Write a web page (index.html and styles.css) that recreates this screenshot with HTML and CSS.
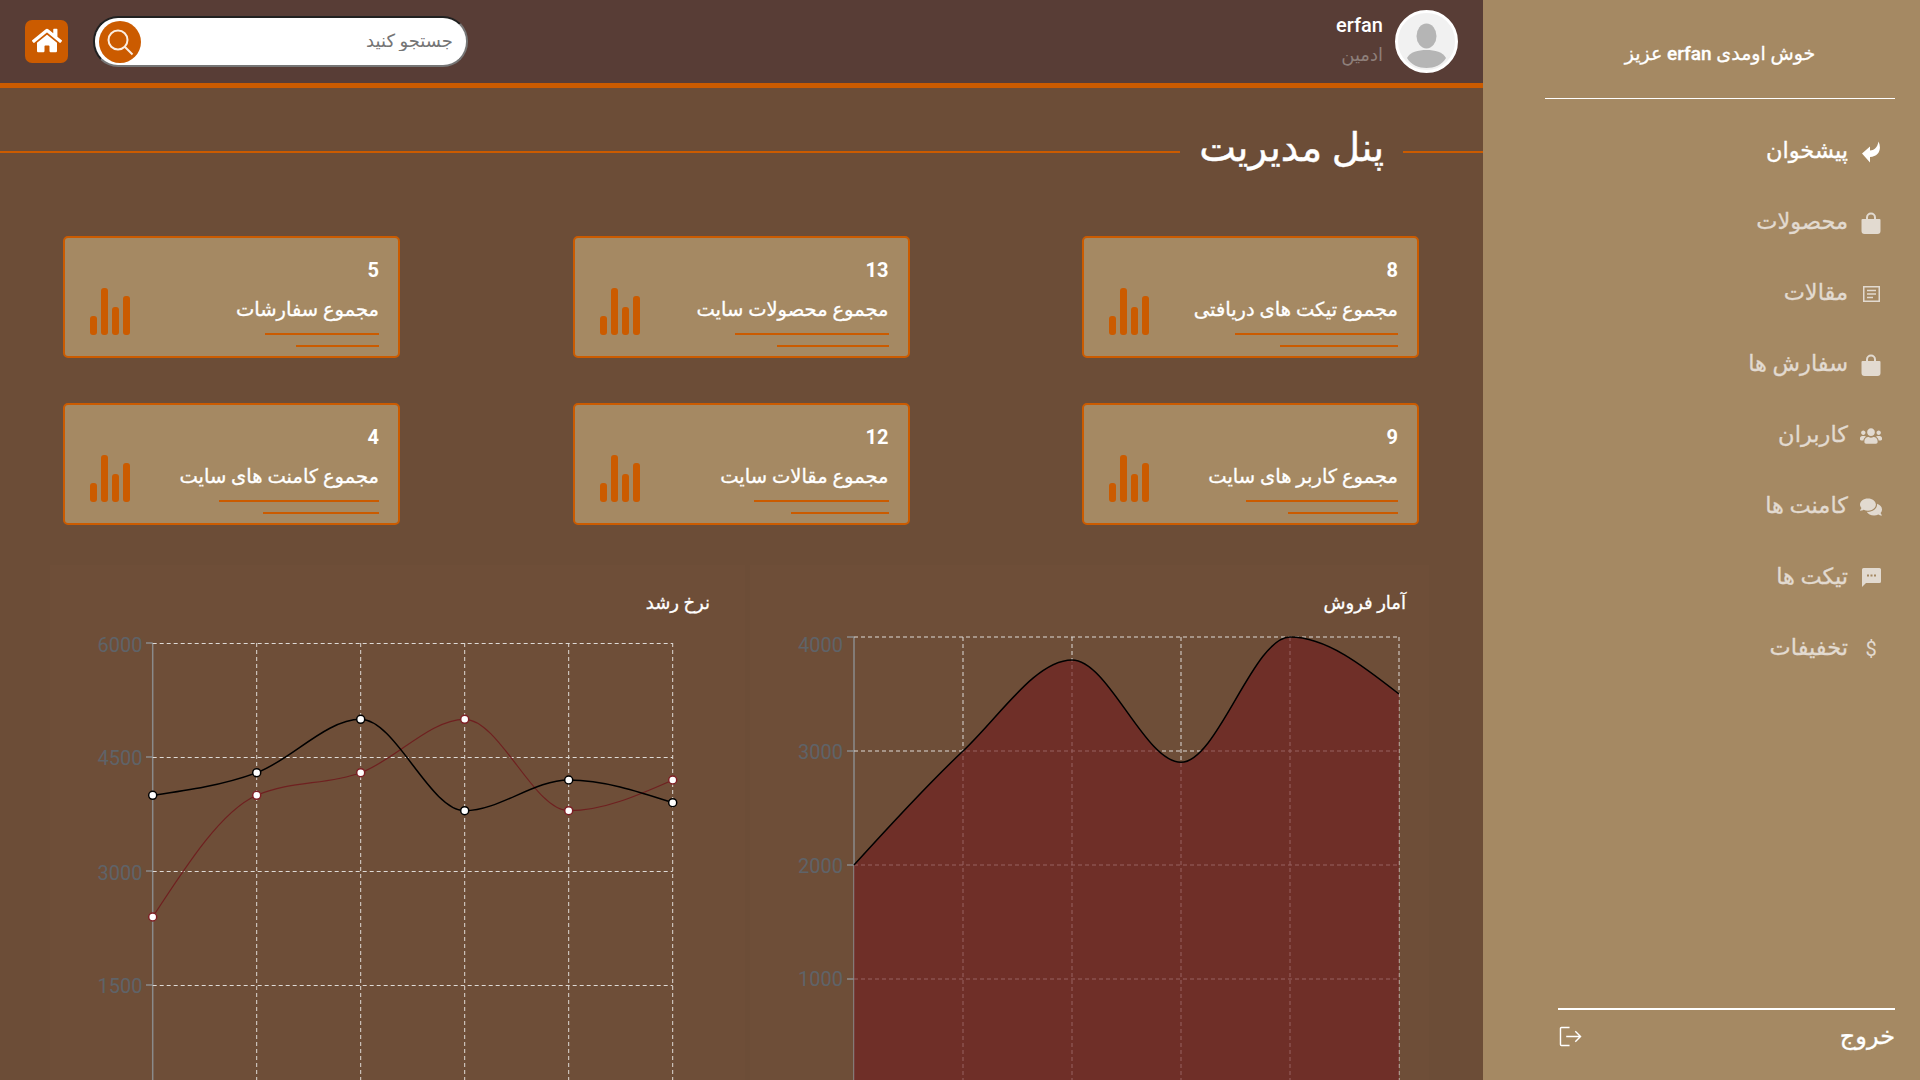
FILE: index.html
```html
<!doctype html>
<html lang="fa" dir="rtl">
  <head>
    <meta charset="utf-8"/>
    <title>پنل مدیریت</title>
    <link rel="stylesheet" href="styles.css">
  </head>
  <body>
    <aside class="sidebar">
      <div class="welcome">خوش اومدی erfan عزیز</div>
      <nav class="side-nav">
        <a class="side-link active">
          <span class="side-icon"><svg width="19" height="22" viewBox="0 0 19 22"><path d="M0 12.500L8 5.500V9.500C12 9.500 15.500 6.500 16.500 0.500C20 8 17 15.500 8 16V21.500Z"/></svg></span>
          پیشخوان
        </a>
        <a class="side-link">
          <span class="side-icon"><svg width="20" height="22" viewBox="0 0 20 22"><path d="M5 7V5.500a5 5 0 0 1 10 0V7h3.500a1 1 0 0 1 1 1v11a3 3 0 0 1-3 3h-13a3 3 0 0 1-3-3V8a1 1 0 0 1 1-1zm2 0h6V5.500a3 3 0 0 0-6 0z" fill-rule="evenodd"/></svg></span>
          محصولات
        </a>
        <a class="side-link">
          <span class="side-icon"><svg width="17" height="16" viewBox="0 0 17 16"><path class="icon-line" d="M.75.75h15.500v14.500H.75zM4 4.500h9M4 8h9M4 11.500h6"/></svg></span>
          مقالات
        </a>
        <a class="side-link">
          <span class="side-icon"><svg width="20" height="22" viewBox="0 0 20 22"><path d="M5 7V5.500a5 5 0 0 1 10 0V7h3.500a1 1 0 0 1 1 1v11a3 3 0 0 1-3 3h-13a3 3 0 0 1-3-3V8a1 1 0 0 1 1-1zm2 0h6V5.500a3 3 0 0 0-6 0z" fill-rule="evenodd"/></svg></span>
          سفارش ها
        </a>
        <a class="side-link">
          <span class="side-icon"><svg width="22" height="18" viewBox="0 0 640 512"><path d="M96 224c35.300 0 64-28.700 64-64s-28.700-64-64-64-64 28.700-64 64 28.700 64 64 64zm448 0c35.300 0 64-28.700 64-64s-28.700-64-64-64-64 28.700-64 64 28.700 64 64 64zm32 32h-64c-17.600 0-33.500 7.100-45.100 18.600 40.300 22.100 68.900 62 75.100 109.400h66c17.700 0 32-14.300 32-32v-32c0-35.300-28.700-64-64-64zm-256 0c61.900 0 112-50.100 112-112S381.900 32 320 32 208 82.100 208 144s50.100 112 112 112zm76.800 32h-8.300c-20.800 10-43.900 16-68.500 16s-47.600-6-68.500-16h-8.300C179.600 288 128 339.600 128 403.200V432c0 26.500 21.500 48 48 48h288c26.500 0 48-21.500 48-48v-28.800c0-63.600-51.600-115.200-115.200-115.200zm-223.700-13.400C161.500 263.100 145.600 256 128 256H64c-35.300 0-64 28.700-64 64v32c0 17.700 14.300 32 32 32h65.900c6.300-47.400 34.900-87.300 75.200-109.400z"/></svg></span>
          کاربران
        </a>
        <a class="side-link">
          <span class="side-icon"><svg width="22" height="20" viewBox="0 0 576 512"><path d="M416 192c0-88.400-93.100-160-208-160S0 103.600 0 192c0 34.300 14.100 65.900 38 92-13.400 30.200-35.500 54.200-35.800 54.500-2.200 2.300-2.800 5.700-1.500 8.700S4.800 352 8 352c36.600 0 66.900-12.300 88.700-25 32.200 15.700 70.300 25 111.300 25 114.900 0 208-71.600 208-160zm122 220c23.900-26 38-57.700 38-92 0-66.900-53.500-124.200-129.300-148.100.9 6.600 1.300 13.300 1.300 20.100 0 105.900-107.700 192-240 192-10.800 0-21.300-.8-31.700-1.900C207.800 439.600 281.800 480 368 480c41 0 79.100-9.200 111.300-25 21.800 12.700 52.100 25 88.700 25 3.200 0 6.100-1.900 7.300-4.800 1.300-2.900.7-6.300-1.500-8.700-.3-.3-22.400-24.200-35.800-54.500z"/></svg></span>
          کامنت ها
        </a>
        <a class="side-link">
          <span class="side-icon"><svg width="19" height="19" viewBox="0 0 19 19"><path d="M1.500 0h16A1.500 1.500 0 0 1 19 1.500v12a1.500 1.500 0 0 1-1.500 1.500H4l-4 4V1.500A1.500 1.500 0 0 1 1.500 0zM5 6.500v2h2v-2zm3.500 0v2h2v-2zm3.500 0v2h2v-2z" fill-rule="evenodd"/></svg></span>
          تیکت ها
        </a>
        <a class="side-link">
          <span class="side-icon side-dollar">$</span>
          تخفیفات
        </a>
      </nav>
      <div class="logout">
        خروج
        <svg width="23" height="21" viewBox="0 0 24 22"><path class="icon-line" d="M11 1.500H2.500a1 1 0 0 0-1 1v17a1 1 0 0 0 1 1H11M7.500 11H22.500M17 5.500l5.500 5.500-5.500 5.500"/></svg>
      </div>
    </aside>

    <main class="main">
      <header class="topbar">
        <div class="user">
          <div class="avatar">
            <svg width="57" height="57" viewBox="0 0 57 57"><ellipse cx="28.500" cy="23" rx="10" ry="12.500"/><path d="M9 45C12 39 20 37 28.500 37S45 39 48 45C44 52 36 55 28.500 55S13 52 9 45Z"/></svg>
          </div>
          <div class="user-info">
            <div class="user-name">erfan</div>
            <div class="user-role">ادمین</div>
          </div>
        </div>
        <div class="top-left">
          <div class="search">
            <input class="search-input" placeholder="جستجو کنید">
            <button class="search-btn">
              <svg width="28" height="28" viewBox="0 0 28 28"><circle cx="12" cy="12" r="9.500"/><path d="M19 19l7.500 7.500"/></svg>
            </button>
          </div>
          <div class="home-btn">
            <svg width="30" height="27" viewBox="0 0 576 512"><path d="M280.370 148.260L96 300.110V464a16 16 0 0 0 16 16l112.060-.29a16 16 0 0 0 15.920-16V368a16 16 0 0 1 16-16h64a16 16 0 0 1 16 16v95.640a16 16 0 0 0 16 16.050L464 480a16 16 0 0 0 16-16V300L295.670 148.260a12.190 12.190 0 0 0-15.300 0zM571.600 251.470L488 182.560V44.050a12 12 0 0 0-12-12h-56a12 12 0 0 0-12 12v72.610L318.470 43a48 48 0 0 0-61 0L4.340 251.470a12 12 0 0 0-1.600 16.900l25.500 31A12 12 0 0 0 45.150 301l235.220-193.740a12.190 12.190 0 0 1 15.300 0L530.900 301a12 12 0 0 0 16.900-1.600l25.500-31a12 12 0 0 0-1.700-16.930z"/></svg>
          </div>
        </div>
      </header>

      <div class="page-title">
        <span class="title-line short"></span>
        <h1>پنل مدیریت</h1>
        <span class="title-line"></span>
      </div>

      <section class="cards">
        <div class="card">
          <div class="card-text">
            <div class="card-num">8</div>
            <div class="card-label">مجموع تیکت های دریافتی</div>
          </div>
          <div class="bars"><i class="b1"></i><i class="b2"></i><i class="b3"></i><i class="b4"></i></div>
        </div>
        <div class="card">
          <div class="card-text">
            <div class="card-num">13</div>
            <div class="card-label">مجموع محصولات سایت</div>
          </div>
          <div class="bars"><i class="b1"></i><i class="b2"></i><i class="b3"></i><i class="b4"></i></div>
        </div>
        <div class="card">
          <div class="card-text">
            <div class="card-num">5</div>
            <div class="card-label">مجموع سفارشات</div>
          </div>
          <div class="bars"><i class="b1"></i><i class="b2"></i><i class="b3"></i><i class="b4"></i></div>
        </div>
        <div class="card">
          <div class="card-text">
            <div class="card-num">9</div>
            <div class="card-label">مجموع کاربر های سایت</div>
          </div>
          <div class="bars"><i class="b1"></i><i class="b2"></i><i class="b3"></i><i class="b4"></i></div>
        </div>
        <div class="card">
          <div class="card-text">
            <div class="card-num">12</div>
            <div class="card-label">مجموع مقالات سایت</div>
          </div>
          <div class="bars"><i class="b1"></i><i class="b2"></i><i class="b3"></i><i class="b4"></i></div>
        </div>
        <div class="card">
          <div class="card-text">
            <div class="card-num">4</div>
            <div class="card-label">مجموع کامنت های سایت</div>
          </div>
          <div class="bars"><i class="b1"></i><i class="b2"></i><i class="b3"></i><i class="b4"></i></div>
        </div>
      </section>

      <section class="charts">
        <div class="chart-panel sales">
          <div class="chart-title">آمار فروش</div>
          <svg class="chart" width="679" height="466" viewBox="750 614 679 466">
            <path class="axis" d="M854 637V1080M847 637H854M847 751H854M847 865H854M847 979H854"/>
            <path class="grid" d="M854 637H1399M854 751H1399M854 865H1399M854 979H1399M963 637V1080M1072 637V1080M1181 637V1080M1290 637V1080M1399 637V1080"/>
            <path class="area" d="M854 865C890.300 825 926.700 785.200 963 751C999.300 716.800 1035.700 660 1072 660C1108.300 660 1144.700 762.300 1181 762.300C1217.300 762.300 1253.700 637 1290 637C1326.300 637 1362.700 665.500 1399 694V1080H854Z"/>
            <path class="line-black" d="M854 865C890.300 825 926.700 785.200 963 751C999.300 716.800 1035.700 660 1072 660C1108.300 660 1144.700 762.300 1181 762.300C1217.300 762.300 1253.700 637 1290 637C1326.300 637 1362.700 665.500 1399 694"/>
            <text class="y-label" x="843" y="652">4000</text>
            <text class="y-label" x="843" y="759">3000</text>
            <text class="y-label" x="843" y="873">2000</text>
            <text class="y-label" x="843" y="986">1000</text>
          </svg>
        </div>
        <div class="chart-panel growth">
          <div class="chart-title">نرخ رشد</div>
          <svg class="chart" width="695" height="466" viewBox="50 614 695 466">
            <path class="axis" d="M152.700 643V1080M146 643H152.700M146 757H152.700M146 871H152.700M146 985H152.700"/>
            <path class="grid" d="M152.700 643.500H672.700M152.700 757.500H672.700M152.700 871.500H672.700M152.700 985.500H672.700M256.700 643V1080M360.700 643V1080M464.700 643V1080M568.700 643V1080M672.700 643V1080"/>
            <path class="line-red" d="M152.700 917C187.400 863.700 222 810.300 256.700 795.300C291.400 780.300 326 785.350 360.700 772.700C395.400 760.050 430 719.300 464.700 719.300C499.400 719.300 534 810.700 568.700 810.700C603.400 810.700 638 795.300 672.700 780"/>
            <path class="line-black" d="M152.700 795.300C187.400 790.300 222 785.400 256.700 772.700C291.400 760 326 719.300 360.700 719.300C395.400 719.300 430 810.700 464.700 810.700C499.400 810.700 534 780 568.700 780C603.400 780 638 791.400 672.700 802.700"/>
            <g class="dots-red">
              <circle cx="152.700" cy="917" r="4"/>
              <circle cx="256.700" cy="795.300" r="4"/>
              <circle cx="360.700" cy="772.700" r="4"/>
              <circle cx="464.700" cy="719.300" r="4"/>
              <circle cx="568.700" cy="810.700" r="4"/>
              <circle cx="672.700" cy="780" r="4"/>
            </g>
            <g class="dots-black">
              <circle cx="152.700" cy="795.300" r="4"/>
              <circle cx="256.700" cy="772.700" r="4"/>
              <circle cx="360.700" cy="719.300" r="4"/>
              <circle cx="464.700" cy="810.700" r="4"/>
              <circle cx="568.700" cy="780" r="4"/>
              <circle cx="672.700" cy="802.700" r="4"/>
            </g>
            <text class="y-label" x="142.500" y="652">6000</text>
            <text class="y-label" x="142.500" y="765">4500</text>
            <text class="y-label" x="142.500" y="880">3000</text>
            <text class="y-label" x="142.500" y="993">1500</text>
          </svg>
        </div>
      </section>
    </main>
  </body>
</html>
```

FILE: styles.css
```css
* {
  box-sizing: border-box;
}
html, body {
  margin: 0;
  height: 1080px;
  overflow: hidden;
}
body {
  display: flex;
  font-family: Roboto, "DejaVu Sans", sans-serif;
  background-color: #6c4d37;
  color: #ffffff;
}

/* sidebar */
.sidebar {
  width: 437px;
  height: 1080px;
  background-color: #a58963;
  display: flex;
  flex-direction: column;
  padding: 0 25px 0 25px;
}
.welcome {
  height: 99px;
  padding-top: 42px;
  margin-left: 37px;
  line-height: 24px;
  text-align: center;
  font-size: 19px;
  font-weight: 500;
  -webkit-text-stroke: 0.3px;
  border-bottom: 1px solid #ffffff;
}
.side-nav {
  margin-top: 17px;
  flex: 1;
}
.side-link {
  height: 71px;
  display: flex;
  align-items: center;
  gap: 4px;
  padding-right: 5px;
  padding-bottom: 3px;
  font-size: 22.5px;
  -webkit-text-stroke: 0.3px;
  color: #e2dad0;
}
.side-link.active {
  color: #ffffff;
}
.side-icon {
  width: 38px;
  display: flex;
  justify-content: center;
  align-items: center;
  padding-top: 3px;
}
.side-icon svg {
  fill: currentColor;
  display: block;
}
.icon-line {
  fill: none;
  stroke: currentColor;
  stroke-width: 1.5;
}
.side-dollar {
  font-size: 20px;
  -webkit-text-stroke: 0;
}
.logout {
  height: 72px;
  margin-left: 50px;
  border-top: 2px solid #ffffff;
  display: flex;
  justify-content: space-between;
  align-items: center;
  padding: 0 0 18px 1px;
  font-size: 24px;
  font-weight: 500;
  -webkit-text-stroke: 0.3px;
}
.logout svg {
  display: block;
}

/* top bar */
.main {
  width: 1483px;
  height: 1080px;
}
.topbar {
  height: 88px;
  background-color: #583d36;
  border-bottom: 5px solid #cb5b00;
  display: flex;
  justify-content: space-between;
  align-items: center;
  padding: 0 25px 0 25px;
}
.user {
  display: flex;
  align-items: center;
  gap: 12px;
}
.avatar {
  width: 63px;
  height: 63px;
  border-radius: 50%;
  border: 3px solid #ffffff;
  background-color: #f1f1f1;
  overflow: hidden;
}
.avatar svg {
  display: block;
  fill: #b5b5b5;
}
.user-info {
  padding-bottom: 4px;
}
.user-name {
  font-size: 20px;
  font-weight: 500;
  line-height: 30px;
}
.user-role {
  font-size: 18px;
  line-height: 30px;
  color: #8e7f7a;
}
.top-left {
  display: flex;
  align-items: center;
  gap: 25px;
}
.search {
  position: relative;
  width: 375px;
  height: 51px;
}
.search-input {
  width: 100%;
  height: 100%;
  border: 2px inset #767676;
  border-radius: 25px;
  background-color: #ffffff;
  padding: 0 13px 2px 60px;
  font-family: Roboto, "DejaVu Sans", sans-serif;
  font-size: 18px;
  outline: none;
}
.search-btn {
  position: absolute;
  left: 6px;
  top: 5px;
  width: 42px;
  height: 42px;
  padding: 0;
  border: none;
  border-radius: 50%;
  background-color: #cb5b00;
  display: flex;
  justify-content: center;
  align-items: center;
}
.search-btn svg {
  fill: none;
  stroke: #fbeee2;
  stroke-width: 2;
}
.home-btn {
  width: 43px;
  height: 43px;
  border-radius: 7px;
  background-color: #cb5b00;
  display: flex;
  justify-content: center;
  align-items: center;
  padding-bottom: 2px;
}
.home-btn svg {
  fill: #ffffff;
  display: block;
}

/* title */
.page-title {
  display: flex;
  align-items: center;
  margin-top: 41px;
  height: 46px;
}
.page-title h1 {
  margin: -8px 19px 0;
  font-size: 39px;
  font-weight: 400;
  line-height: 46px;
  -webkit-text-stroke: 0.4px;
  white-space: nowrap;
}
.title-line {
  flex: 1;
  height: 2px;
  background-color: #cb5b00;
}
.title-line.short {
  flex: none;
  width: 80px;
}

/* cards */
.cards {
  display: grid;
  grid-template-columns: repeat(3, 337px);
  justify-content: space-between;
  row-gap: 45px;
  margin-top: 61px;
  padding: 0 64px 0 63px;
}
.card {
  height: 122px;
  border: 2px solid #cb5b00;
  border-radius: 5px;
  background-color: #a58963;
  display: flex;
  justify-content: space-between;
  align-items: flex-start;
  padding: 19px 19px 0 25px;
}
.card-num {
  font-size: 20px;
  font-weight: 700;
  line-height: 26px;
}
.card-label {
  position: relative;
  width: fit-content;
  margin-top: 15px;
  font-size: 19.5px;
  font-weight: 500;
  line-height: 24px;
  -webkit-text-stroke: 0.3px;
  padding-bottom: 32px;
}
.card-label::before, .card-label::after {
  content: '';
  position: absolute;
  right: 0;
  height: 2px;
  background-color: #cb5b00;
}
.card-label::before {
  top: 35px;
  width: 80%;
}
.card-label::after {
  top: 47px;
  width: 58%;
}
.bars {
  display: flex;
  align-items: flex-end;
  gap: 4px;
  height: 47px;
  margin-top: 31px;
  direction: ltr;
}
.bars i {
  display: block;
  width: 7px;
  border-radius: 3px;
  background-color: #cb5b00;
}
.b1 { height: 19px; }
.b2 { height: 47px; }
.b3 { height: 28px; }
.b4 { height: 39px; }

/* charts */
.charts {
  display: flex;
  margin-top: 40px;
  gap: 5px;
  padding: 0 54px 0 50px;
}
.chart-panel {
  padding-top: 27px;
  background-color: #6e4e38;
}
.chart-title {
  font-size: 18px;
  font-weight: 500;
  line-height: 22px;
  -webkit-text-stroke: 0.3px;
}
.sales .chart-title {
  padding-right: 23px;
}
.growth .chart-title {
  padding-right: 35px;
}
.chart {
  display: block;
}
.axis {
  fill: none;
  stroke: #8a8a8a;
  stroke-width: 1.500;
}
.grid {
  fill: none;
  stroke: #dedad6;
  stroke-width: 1;
  stroke-dasharray: 4 3;
}
.area {
  fill: #701f20;
  fill-opacity: 0.65;
}
.line-black {
  fill: none;
  stroke: #000000;
  stroke-width: 1.500;
}
.line-red {
  fill: none;
  stroke: #6f2020;
  stroke-width: 1.200;
}
.dots-black circle {
  fill: #ffffff;
  stroke: #000000;
  stroke-width: 1.500;
}
.dots-red circle {
  fill: #ffffff;
  stroke: #7d1f24;
  stroke-width: 1.500;
}
.y-label {
  direction: ltr;
  font-family: Roboto, sans-serif;
  font-size: 20px;
  fill: #5f6368;
  text-anchor: end;
}
```
